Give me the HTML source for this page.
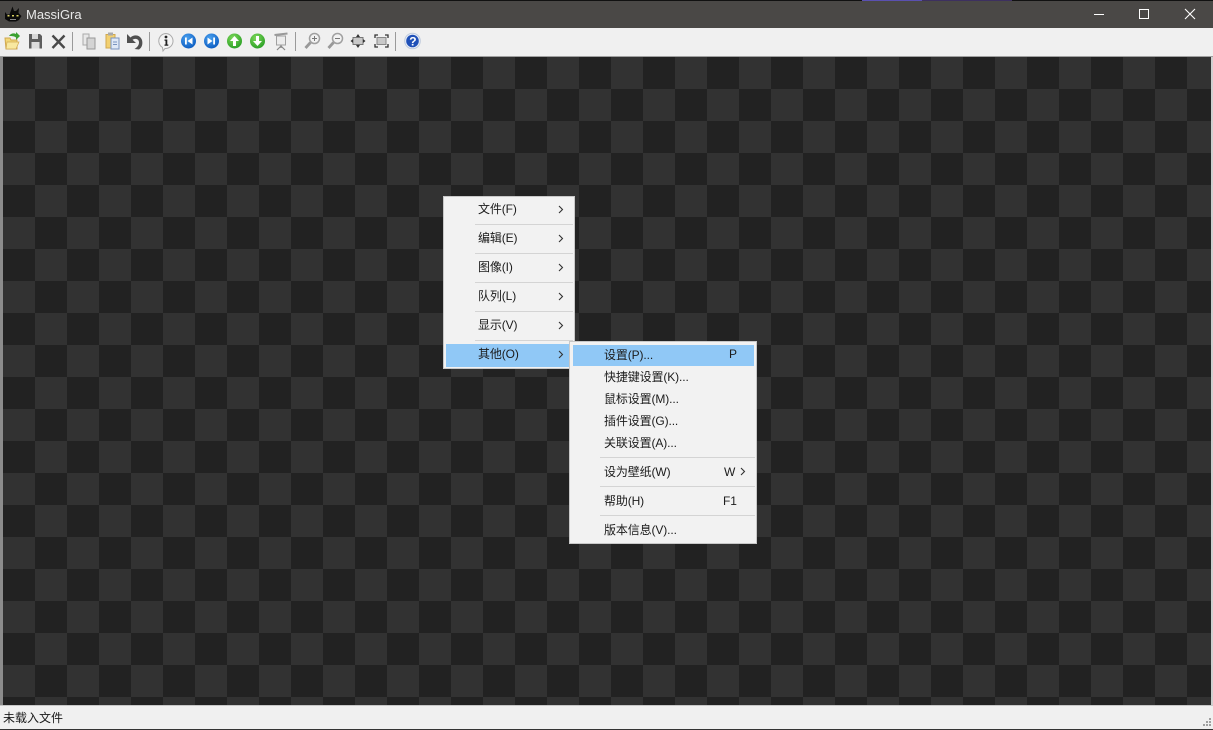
<!DOCTYPE html>
<html><head><meta charset="utf-8"><title>MassiGra</title>
<style>
html,body{margin:0;padding:0;width:1213px;height:730px;overflow:hidden;background:#4a4846}
body{position:relative;font-family:"Liberation Sans","Noto Sans CJK SC",sans-serif;font-size:12px;color:#1a1a1a}
.abs{position:absolute}
#title{left:0;top:0;width:1213px;height:28px;background:#4a4846;border-top:1px solid #111;box-sizing:border-box}
#ttext{left:26px;top:7px;color:#e8e8e8;font-size:13px;line-height:15px}
#tb{left:0;top:28px;width:1213px;height:28px;background:#f0f0f0}
#tbline{left:0;top:56px;width:1213px;height:1px;background:#a0a0a0}
#status{left:0;top:705px;width:1213px;height:24px;background:#f0f0f0;border-top:1px solid #c8c8c8;box-sizing:border-box}
#stext{left:3px;top:711px;line-height:15px;font-size:12px}
#bot{left:0;top:729px;width:1213px;height:1px;background:#333}
.menu{background:#f2f2f2;box-sizing:border-box;border:1px solid #c8c8c8}
.it{position:absolute;font-size:12px;line-height:16px;white-space:nowrap;color:#1c1c1c;letter-spacing:-.12px}
.sep{position:absolute;height:1px;background:#d4d4d4}
.hi{position:absolute;background:#90c8f6}
.ch{position:absolute;width:6px;height:9px}
</style></head><body>
<div class="abs" id="title"></div>
<svg class="abs" style="left:832px;top:0" width="180" height="2"><rect x="30" width="150" height="1" fill="#3d3060"/><rect x="30" width="60" height="1" fill="#5a50b0"/></svg>
<svg class="abs" style="left:4px;top:6px" width="18" height="16" viewBox="0 0 18 16"><path d="M1 13V6L3 8.500H5.500L8.500 0.500 10 5 12 5 15 2 14.500 7 17.500 10 15 14 12 15.500H5Z" fill="#0a0a0a"/><rect x="3.500" y="9" width="2" height="1.500" fill="#d8d060"/><rect x="8" y="9" width="2" height="1.500" fill="#d8d060"/><rect x="12.500" y="9" width="2" height="1.500" fill="#d8d060"/><rect x="6" y="13" width="6" height="1" fill="#888"/></svg>
<div class="abs" id="ttext">MassiGra</div>
<svg class="abs" style="left:1090px;top:5px" width="110" height="20" viewBox="0 0 110 20"><path d="M4 9.500H14" stroke="#fff" stroke-width="1"/><rect x="49.500" y="4.500" width="9" height="9" fill="none" stroke="#fff"/><path d="M95 4L105 14M105 4L95 14" stroke="#fff" stroke-width="1.100"/></svg>
<div class="abs" id="tb"></div>
<div class="abs" id="tbline"></div>
<div class="abs" style="left:0;top:57px;width:3px;height:648px;background:#8c8c8c"></div>
<div class="abs" style="left:1211px;top:57px;width:2px;height:648px;background:#d0d0d0"></div>
<svg class="abs" id="cv" style="left:3px;top:57px" width="1208" height="648">
<defs><pattern id="c" width="64" height="64" patternUnits="userSpaceOnUse"><rect width="64" height="64" fill="#222"/><rect x="32" width="32" height="32" fill="#323232"/><rect y="32" width="32" height="32" fill="#323232"/></pattern></defs>
<rect width="1208" height="648" fill="url(#c)"/></svg>

<!-- toolbar icons -->
<svg class="abs" style="left:0;top:28px;filter:blur(.35px)" width="430" height="28" viewBox="0 0 430 28">
<defs>
<radialGradient id="b" cx=".4" cy=".3" r=".8"><stop offset="0" stop-color="#4aa0ee"/><stop offset="1" stop-color="#0656bd"/></radialGradient>
<radialGradient id="g" cx=".4" cy=".3" r=".8"><stop offset="0" stop-color="#7ed85a"/><stop offset="1" stop-color="#229a20"/></radialGradient>
</defs>
<!-- open -->
<path d="M5 10H10L11 12H17V21H6Z" fill="#f2d878" stroke="#d0a850"/><path d="M6 21L7 14H19L16 21Z" fill="#f8e8a0" stroke="#d0a850" stroke-width=".7"/><path d="M9 8C11 5 14 5 16 6V4L20 8 16 12V9.500C14 8 12 8 9 8Z" fill="#3aa030"/>
<!-- save -->
<path d="M29 6H40L42 8V20.500H29Z" fill="#5e5e5e"/><rect x="32" y="6" width="6" height="5" fill="#d8d8d8"/><rect x="31.500" y="14" width="8" height="6.500" fill="#ddd"/>
<!-- x -->
<path d="M52.500 7.500L64.500 20M64.500 7.500L52.500 20" stroke="#4a4a4a" stroke-width="2.400"/>
<rect x="72" y="4" width="1" height="19" fill="#9a9a9a"/>
<!-- copy -->
<path d="M83 6H89V17H83Z" fill="#e8e8e8" stroke="#aaa"/><path d="M87 10H95V21H87Z" fill="#d4d4d4" stroke="#999"/>
<!-- paste -->
<path d="M106 6.500H115V20H106Z" fill="#f2d070" stroke="#d0a850"/><rect x="108" y="4.500" width="5" height="3" fill="#aaa"/><path d="M111 10H119V21H111Z" fill="#dfe8f6" stroke="#7a94c0"/><path d="M113 14H117M113 16.500H117" stroke="#7a94c0"/>
<!-- undo -->
<path d="M127 6V15H136L132.500 11.800C135.500 10 139 11 139 14.500C139 17 137.500 19 134.500 21L139 21.500C142 19.500 143 16 142 12C140 7 134.500 6 130.500 9.500Z" fill="#505050"/>
<rect x="149" y="4" width="1" height="19" fill="#9a9a9a"/>
<!-- info -->
<path d="M166 5.500A7.500 7.500 0 1 1 165 20.500L163 23 162.500 19.500A7.500 7.500 0 0 1 166 5.500Z" fill="#f4f4f4" stroke="#aaa"/><circle cx="166" cy="9" r="1.400" fill="#222"/><path d="M164.500 11.500H167.300V16.500H168.300V17.800H164.500V16.500H165.500V12.800H164.500Z" fill="#222"/>
<!-- nav -->
<circle cx="188.500" cy="13" r="7.500" fill="url(#b)"/><path d="M185 9.500H186.800V16.500H185ZM192.500 9.500V16.500L187.500 13Z" fill="#fff"/>
<circle cx="211.500" cy="13" r="7.500" fill="url(#b)"/><path d="M215 9.500H213.200V16.500H215ZM207.500 9.500V16.500L212.500 13Z" fill="#fff"/>
<circle cx="234.500" cy="13" r="7.500" fill="url(#g)"/><path d="M234.500 8L230 13H233V18H236V13H239Z" fill="#fff"/>
<circle cx="257.500" cy="13" r="7.500" fill="url(#g)"/><path d="M257.500 18L253 13H256V8H259V13H262Z" fill="#fff"/>
<!-- slideshow -->
<path d="M274.500 7L287.500 5.500" stroke="#999" stroke-width="2"/><path d="M276.500 8H285.500V17H276.500Z" fill="#ececec" stroke="#a0a0a0"/><path d="M281 17V20M281 18L277 22M281 18L285 22" stroke="#888" stroke-width="1.200"/>
<rect x="295" y="4" width="1" height="19" fill="#9a9a9a"/>
<!-- zoom in -->
<circle cx="314.500" cy="10.500" r="5" fill="#f2f2f2" stroke="#a0a0a0" stroke-width="1.500"/><path d="M310.500 14.500L305.500 20" stroke="#999" stroke-width="2.800"/><path d="M312 10.500H317M314.500 8V13" stroke="#777"/>
<!-- zoom out -->
<circle cx="337.500" cy="10.500" r="5" fill="#f2f2f2" stroke="#a0a0a0" stroke-width="1.500"/><path d="M333.500 14.500L328.500 20" stroke="#999" stroke-width="2.800"/><path d="M335 10.500H340" stroke="#777"/>
<!-- fit -->
<rect x="353" y="9.500" width="10" height="7" fill="#c8c8c8" stroke="#777"/><path d="M358 6L356 9H360ZM358 20L356 17H360ZM350.500 13L353 11V15ZM365.500 13L363 11V15Z" fill="#333"/>
<!-- full -->
<rect x="377" y="9.500" width="9" height="7" fill="#c8c8c8" stroke="#888"/><path d="M375 10V7H378M385 7H388V10M388 16V19H385M378 19H375V16" fill="none" stroke="#333" stroke-width="1.300"/>
<rect x="395" y="4" width="1" height="19" fill="#9a9a9a"/>
<!-- help -->
<circle cx="412.500" cy="13" r="7.800" fill="#e8eef8" stroke="#c0cbdc"/><circle cx="412.500" cy="13" r="6.300" fill="#1f50b8"/><text x="409.200" y="17.500" font-family="Liberation Sans" font-weight="bold" font-size="12" fill="#fff">?</text>
</svg>

<!-- main menu -->
<div class="abs menu" style="left:443px;top:196px;width:132px;height:173px">
<div class="sep" style="left:31px;top:27px;width:98px"></div>
<div class="sep" style="left:31px;top:56px;width:98px"></div>
<div class="sep" style="left:31px;top:85px;width:98px"></div>
<div class="sep" style="left:31px;top:114px;width:98px"></div>
<div class="sep" style="left:31px;top:143px;width:98px"></div>
<div class="hi" style="left:2px;top:147px;width:127px;height:23px"></div>
<div class="it" style="left:34px;top:4px">文件(F)</div>
<div class="it" style="left:34px;top:33px">编辑(E)</div>
<div class="it" style="left:34px;top:62px">图像(I)</div>
<div class="it" style="left:34px;top:91px">队列(L)</div>
<div class="it" style="left:34px;top:120px">显示(V)</div>
<div class="it" style="left:34px;top:149px">其他(O)</div>
<svg class="ch" style="left:114px;top:8px" viewBox="0 0 6 9"><path d="M1 1L4.500 4.500 1 8" fill="none" stroke="#333" stroke-width="1.100"/></svg>
<svg class="ch" style="left:114px;top:37px" viewBox="0 0 6 9"><path d="M1 1L4.500 4.500 1 8" fill="none" stroke="#333" stroke-width="1.100"/></svg>
<svg class="ch" style="left:114px;top:66px" viewBox="0 0 6 9"><path d="M1 1L4.500 4.500 1 8" fill="none" stroke="#333" stroke-width="1.100"/></svg>
<svg class="ch" style="left:114px;top:95px" viewBox="0 0 6 9"><path d="M1 1L4.500 4.500 1 8" fill="none" stroke="#333" stroke-width="1.100"/></svg>
<svg class="ch" style="left:114px;top:124px" viewBox="0 0 6 9"><path d="M1 1L4.500 4.500 1 8" fill="none" stroke="#333" stroke-width="1.100"/></svg>
<svg class="ch" style="left:114px;top:153px" viewBox="0 0 6 9"><path d="M1 1L4.500 4.500 1 8" fill="none" stroke="#333" stroke-width="1.100"/></svg>
</div>

<!-- submenu -->
<div class="abs menu" style="left:569px;top:341px;width:188px;height:203px">
<div class="hi" style="left:3px;top:3px;width:181px;height:21px"></div>
<div class="it" style="left:34px;top:5px">设置(P)...</div>
<div class="it" style="left:159px;top:4px">P</div>
<div class="it" style="left:34px;top:27px">快捷键设置(K)...</div>
<div class="it" style="left:34px;top:49px">鼠标设置(M)...</div>
<div class="it" style="left:34px;top:71px">插件设置(G)...</div>
<div class="it" style="left:34px;top:93px">关联设置(A)...</div>
<div class="sep" style="left:30px;top:115px;width:155px"></div>
<div class="it" style="left:34px;top:122px">设为壁纸(W)</div>
<div class="it" style="left:154px;top:122px">W</div>
<svg class="ch" style="left:170px;top:125px" viewBox="0 0 6 9"><path d="M1 1L4.500 4.500 1 8" fill="none" stroke="#333" stroke-width="1.100"/></svg>
<div class="sep" style="left:30px;top:144px;width:155px"></div>
<div class="it" style="left:34px;top:151px">帮助(H)</div>
<div class="it" style="left:153px;top:151px">F1</div>
<div class="sep" style="left:30px;top:173px;width:155px"></div>
<div class="it" style="left:34px;top:180px">版本信息(V)...</div>
</div>

<div class="abs" id="status"></div>
<div class="abs" id="stext">未载入文件</div>
<svg class="abs" style="left:1202px;top:717px" width="10" height="11"><g fill="#a0a0a0"><rect x="7" y="1" width="2" height="2"/><rect x="4" y="4" width="2" height="2"/><rect x="7" y="4" width="2" height="2"/><rect x="1" y="7" width="2" height="2"/><rect x="4" y="7" width="2" height="2"/><rect x="7" y="7" width="2" height="2"/></g></svg>
<div class="abs" id="bot"></div>
</body></html>
